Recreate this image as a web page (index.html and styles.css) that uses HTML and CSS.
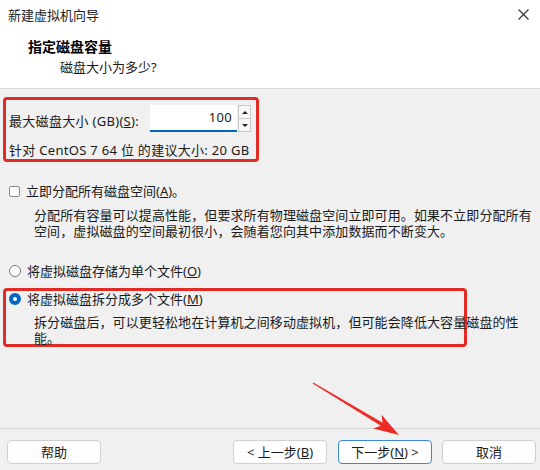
FILE: index.html
```html
<!DOCTYPE html>
<html lang="zh-CN">
<head>
    <meta charset="UTF-8">
    <title>新建虚拟机向导</title>
    <link rel="stylesheet" href="styles.css">
</head>
<body>
    <div class="window">
        <header class="top">
            <div class="titlebar">
                <span>新建虚拟机向导</span>
                <svg class="close" width="11" height="11" viewBox="0 0 11 11">
                    <path d="M0.5 0.5 L10.5 10.5 M10.5 0.5 L0.5 10.5" stroke="#333" stroke-width="1.1"/>
                </svg>
            </div>
            <div class="heading">
                <h1>指定磁盘容量</h1>
                <p>磁盘大小为多少?</p>
            </div>
        </header>

        <main class="content">
            <div class="size-box mark">
                <div class="size-row">
                    <label>最大磁盘大小 (GB)(<u>S</u>):</label>
                    <div class="field">100</div>
                    <div class="spin">
                        <span><i class="up"></i></span>
                        <span><i class="down"></i></span>
                    </div>
                </div>
                <div class="hint">针对 CentOS 7 64 位 的建议大小: 20 GB</div>
            </div>

            <div class="option check-row">
                <span class="check"></span>
                <span>立即分配所有磁盘空间(<u>A</u>)。</span>
            </div>
            <p class="desc">分配所有容量可以提高性能，但要求所有物理磁盘空间立即可用。如果不立即分配所有空间，虚拟磁盘的空间最初很小，会随着您向其中添加数据而不断变大。</p>

            <div class="option radio-row">
                <span class="radio"></span>
                <span>将虚拟磁盘存储为单个文件(<u>O</u>)</span>
            </div>
            <div class="split mark">
                <div class="option">
                    <span class="radio on"></span>
                    <span>将虚拟磁盘拆分成多个文件(<u>M</u>)</span>
                </div>
                <p class="desc">拆分磁盘后，可以更轻松地在计算机之间移动虚拟机，但可能会降低大容量磁盘的性能。</p>
            </div>
        </main>

        <footer class="buttons">
            <button class="btn help">帮助</button>
            <button class="btn">&lt; 上一步(<u>B</u>)</button>
            <button class="btn next">下一步(<u>N</u>) &gt;</button>
            <button class="btn">取消</button>
        </footer>

        <!-- 标注箭头 -->
        <svg class="arrow" width="540" height="470" viewBox="0 0 540 470">
            <polygon fill="#ee2a24" points="313.3,382.6 382.6,422.7 381.5,414.8 399,435 373.3,428.6 380.8,425.7 312.7,383.4"/>
        </svg>
    </div>
</body>
</html>
```

FILE: styles.css
```css
body {
    margin: 0;
    background: #f0f0f0;
    font-family: "Noto Sans", "Noto Sans CJK SC", sans-serif;
    font-size: 13px;
    color: #1a1a1a;
}
.window {
    position: relative;
    width: 540px;
    height: 470px;
    display: flex;
    flex-direction: column;
}
.top {
    background: #fff;
    height: 88px;
    border-bottom: 1px solid #dcdcdc;
}
.titlebar {
    display: flex;
    justify-content: space-between;
    align-items: center;
    height: 28px;
    padding: 0 11px 0 8px;
    color: #222;
}
.heading {
    padding: 9px 0 0 28px;
}
.heading h1 {
    margin: 0;
    font-size: 14px;
    line-height: 20px;
    font-weight: bold;
    color: #000;
}
.heading p {
    margin: 0 0 0 32px;
    line-height: 20px;
}
.content {
    flex: 1;
    padding: 8px 0 0 3px;
}
.mark {
    border: 3px solid #e12b25;
    border-radius: 4px;
    box-sizing: border-box;
}
.size-box {
    width: 256px;
    padding: 5px 0 1px 3px;
    letter-spacing: 0.3px;
}
.size-row {
    display: flex;
    align-items: center;
}
.size-row label {
    width: 141px;
    padding-top: 3px;
}
.field {
    width: 87px;
    height: 27px;
    box-sizing: border-box;
    background: #fff;
    border-bottom: 2px solid #0067c0;
    text-align: right;
    padding-right: 5px;
    line-height: 25px;
}
.spin {
    display: flex;
    flex-direction: column;
    width: 13px;
    height: 27px;
    margin-left: 1px;
    border: 1px solid #c8c8c8;
    box-sizing: border-box;
    background: #f7f7f7;
}
.spin span {
    flex: 1;
    display: flex;
    align-items: center;
    justify-content: center;
}
.spin span + span {
    border-top: 1px solid #c8c8c8;
}
.up {
    border-left: 3px solid transparent;
    border-right: 3px solid transparent;
    border-bottom: 3px solid #222;
}
.down {
    border-left: 3px solid transparent;
    border-right: 3px solid transparent;
    border-top: 3px solid #222;
}
.hint {
    margin-top: 10px;
    line-height: 16px;
}
.option {
    display: flex;
    align-items: center;
    gap: 6px;
    line-height: 16px;
    padding-left: 6px;
}
.check {
    width: 11px;
    height: 11px;
    box-sizing: border-box;
    border: 1px solid #8a8a8a;
    border-radius: 2px;
    background: #fff;
}
.radio {
    width: 12px;
    height: 12px;
    box-sizing: border-box;
    border: 1px solid #7a7a7a;
    border-radius: 50%;
    background: #fff;
}
.radio.on {
    border: 4px solid #0067c0;
}
.check-row {
    margin-top: 21px;
}
.desc {
    margin: 8px 0 0 31px;
    width: 502px;
    line-height: 16px;
    letter-spacing: 0.1px;
}
.radio-row {
    margin-top: 24px;
}
.split {
    margin-top: 9px;
    width: 464px;
    height: 59px;
}
.split .option {
    padding-left: 3px;
}
.split .desc {
    margin: 7px 0 0 28px;
}
.buttons {
    display: flex;
    gap: 10px;
    border-top: 1px solid #d5d5d5;
    padding: 11px 4px 6px 7px;
}
.btn {
    width: 94px;
    height: 24px;
    padding: 0;
    box-sizing: border-box;
    border: 1px solid #d0d0d0;
    border-radius: 4px;
    background: #fdfdfd;
    font: inherit;
    color: #1a1a1a;
    line-height: 22px;
}
.help {
    margin-right: auto;
}
.next {
    margin-left: 1px;
    border-color: #3d8ad4;
}
.arrow {
    position: absolute;
    left: 0;
    top: 0;
    pointer-events: none;
}
```
